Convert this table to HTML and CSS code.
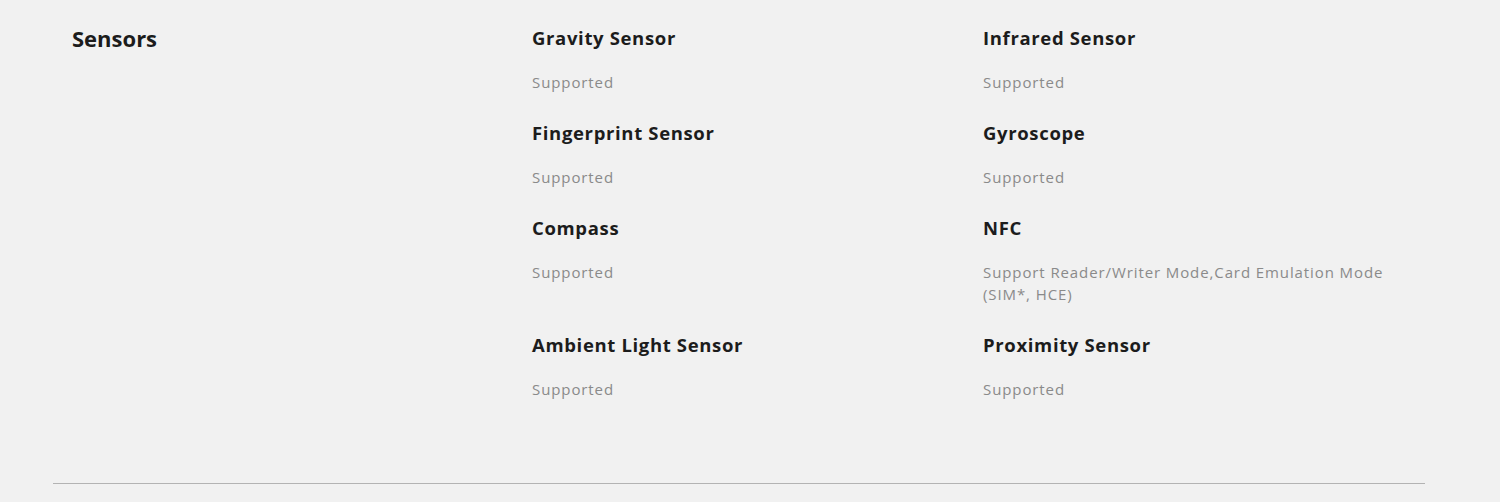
FILE: index.html
```html
<!DOCTYPE html>
<html>
<head>
<meta charset="utf-8">
<link rel="stylesheet" href="styles.css">
</head>
<body>
<section class="spec">
  <div class="spec-row">
    <h2 class="spec-label">Sensors</h2>
    <div class="spec-grid">
      <div class="item"><h3 class="item-title">Gravity Sensor</h3><p class="item-value">Supported</p></div>
      <div class="item"><h3 class="item-title">Infrared Sensor</h3><p class="item-value">Supported</p></div>
      <div class="item"><h3 class="item-title">Fingerprint Sensor</h3><p class="item-value">Supported</p></div>
      <div class="item"><h3 class="item-title">Gyroscope</h3><p class="item-value">Supported</p></div>
      <div class="item"><h3 class="item-title">Compass</h3><p class="item-value">Supported</p></div>
      <div class="item"><h3 class="item-title">NFC</h3><p class="item-value">Support Reader/Writer Mode,Card Emulation Mode (SIM*, HCE)</p></div>
      <div class="item"><h3 class="item-title">Ambient Light Sensor</h3><p class="item-value">Supported</p></div>
      <div class="item"><h3 class="item-title">Proximity Sensor</h3><p class="item-value">Supported</p></div>
    </div>
  </div>
  <hr class="divider">
</section>
</body>
</html>
```
FILE: styles.css
```css
html, body {
  margin: 0;
  padding: 0;
  background: #f1f1f1;
}
body {
  font-family: "Open Sans", "Liberation Sans", sans-serif;
  color: #1c1c1c;
}
.spec {
  padding: 0 75px 0 53px;
}
.spec-row {
  display: grid;
  grid-template-columns: 460px 1fr;
  padding: 26px 0 0 19px;
  height: 483px;
  box-sizing: border-box;
}
.spec-label {
  margin: 0;
  font-size: 22px;
  line-height: 24px;
  font-weight: 700;
}
.spec-grid {
  display: grid;
  grid-template-columns: 451px 1fr;
  align-content: start;
}
.item {
  padding-bottom: 28px;
}
.item-title {
  margin: 0 0 21px;
  font-size: 18.5px;
  line-height: 24px;
  font-weight: 700;
  letter-spacing: 0.65px;
}
.item-value {
  margin: 0;
  font-size: 15px;
  line-height: 22px;
  letter-spacing: 0.9px;
  color: #8a8a8a;
  max-width: 410px;
}
.divider {
  margin: 0;
  border: 0;
  border-top: 1px solid #b3b3b3;
}
```
